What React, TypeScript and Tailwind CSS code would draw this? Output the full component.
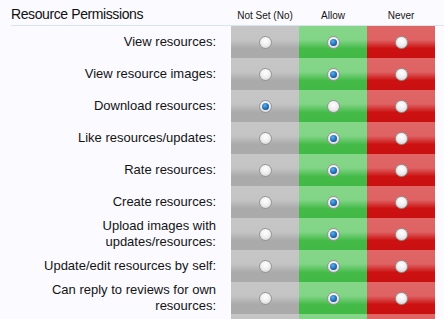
const rows: { label: string; value: 0 | 1 | 2 }[] = [
  { label: "View resources:", value: 1 },
  { label: "View resource images:", value: 1 },
  { label: "Download resources:", value: 0 },
  { label: "Like resources/updates:", value: 1 },
  { label: "Rate resources:", value: 1 },
  { label: "Create resources:", value: 1 },
  { label: "Upload images with updates/resources:", value: 1 },
  { label: "Update/edit resources by self:", value: 1 },
  { label: "Can reply to reviews for own resources:", value: 1 },
  { label: "", value: 1 },
];

function Radio({ checked }: { checked: boolean }) {
  return (
    <span className="flex h-[13px] w-[13px] items-center justify-center rounded-full border border-[#959595] bg-[radial-gradient(circle_at_50%_35%,#ffffff_0%,#f0f0f0_45%,#cdcdcd_100%)]">
      {checked && (
        <span className="h-[7px] w-[7px] rounded-full bg-[radial-gradient(circle_at_40%_35%,#5fb0ee_0%,#1b6db4_55%,#0b3d6e_100%)]" />
      )}
    </span>
  );
}

const cellBg = [
  "bg-[linear-gradient(to_bottom,#c6c6c6_0%,#c4c4c4_44%,#aaaaaa_70%,#aaaaaa_100%)]",
  "bg-[linear-gradient(to_bottom,#85d689_0%,#82d487_44%,#44bb48_70%,#42b946_100%)]",
  "bg-[linear-gradient(to_bottom,#e06666_0%,#de6262_44%,#cc1111_70%,#c91010_100%)]",
];

export default function App() {
  return (
    <div className="h-[319px] w-[444px] overflow-hidden bg-[#fafaff] font-['Liberation_Sans',sans-serif] text-[#141414]">
      <div className="ml-[11px] flex h-[26px] items-end border-b border-[#d7e5f3]">
        <h3 className="w-[220px] pb-[2px] text-[14px] leading-[17px] tracking-[-0.4px] text-[#101010]">Resource Permissions</h3>
        <div className="w-[68px] pb-[3px] text-center text-[10px] leading-[12px]">Not Set (No)</div>
        <div className="w-[68px] pb-[3px] text-center text-[10px] leading-[12px]">Allow</div>
        <div className="w-[68px] pb-[3px] text-center text-[10px] leading-[12px]">Never</div>
      </div>
      {rows.map((row, i) => (
        <div className="flex h-[32px]" key={i}>
          <div className="flex w-[231px] items-center justify-end pl-[30px] pr-[15px] text-right text-[13px] leading-[16px]">
            {row.label}
          </div>
          {[0, 1, 2].map((c) => (
            <div className={`flex w-[68px] items-center justify-center ${cellBg[c]}`} key={c}>
              <Radio checked={row.value === c} />
            </div>
          ))}
        </div>
      ))}
    </div>
  );
}
